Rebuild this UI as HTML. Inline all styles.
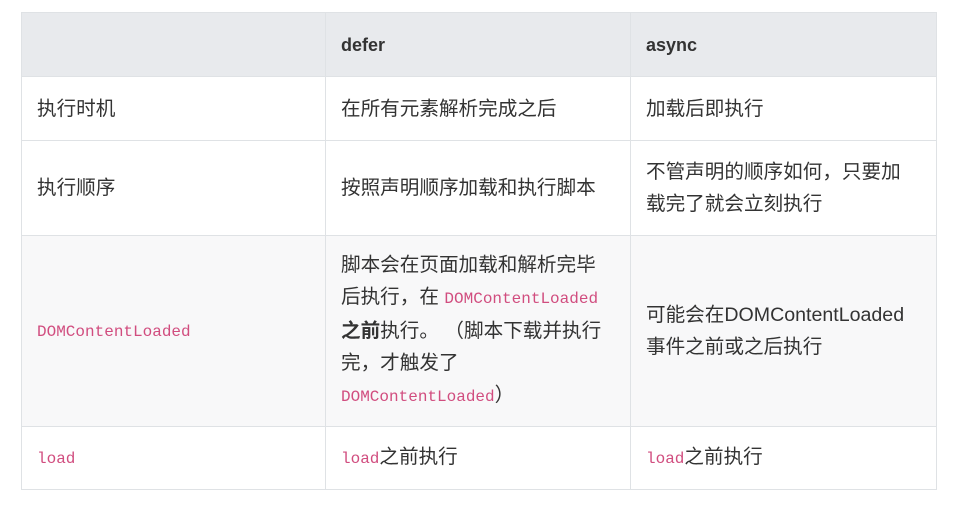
<!DOCTYPE html>
<html><head><meta charset="utf-8"><style>
body{margin:0;background:#fff;width:954px;height:505px;overflow:hidden;font-family:"Liberation Sans","Noto Sans CJK SC",sans-serif;color:#333;font-size:19.6px;}
table{position:absolute;left:21px;top:12px;border-collapse:collapse;table-layout:fixed;width:915px;}
td,th{border:1px solid #dfe2e5;padding:0 15px;text-align:left;vertical-align:middle;line-height:32px;white-space:nowrap;overflow:hidden;}
th{background:#e8eaed;font-weight:bold;height:63px;font-size:18px;}
code{font-family:"Liberation Mono",monospace;color:#d14d7f;font-size:16px;}
.g{background:#f8f8f9;}
</style></head><body>
<table>
<colgroup><col style="width:304px"><col style="width:305px"><col style="width:306px"></colgroup>
<tr><th></th><th>defer</th><th>async</th></tr>
<tr style="height:64px"><td>执行时机</td><td>在所有元素解析完成之后</td><td>加载后即执行</td></tr>
<tr style="height:95px"><td>执行顺序</td><td>按照声明顺序加载和执行脚本</td><td>不管声明的顺序如何，只要加<br>载完了就会立刻执行</td></tr>
<tr class="g" style="height:191px"><td><code>DOMContentLoaded</code></td><td>脚本会在页面加载和解析完毕<br>后执行，在 <code>DOMContentLoaded</code><br><b>之前</b>执行。 （脚本下载并执行<br>完，才触发了<br><code>DOMContentLoaded</code>）</td><td>可能会在DOMContentLoaded<br>事件之前或之后执行</td></tr>
<tr style="height:63px"><td><code>load</code></td><td><code>load</code>之前执行</td><td><code>load</code>之前执行</td></tr>
</table>
</body></html>
